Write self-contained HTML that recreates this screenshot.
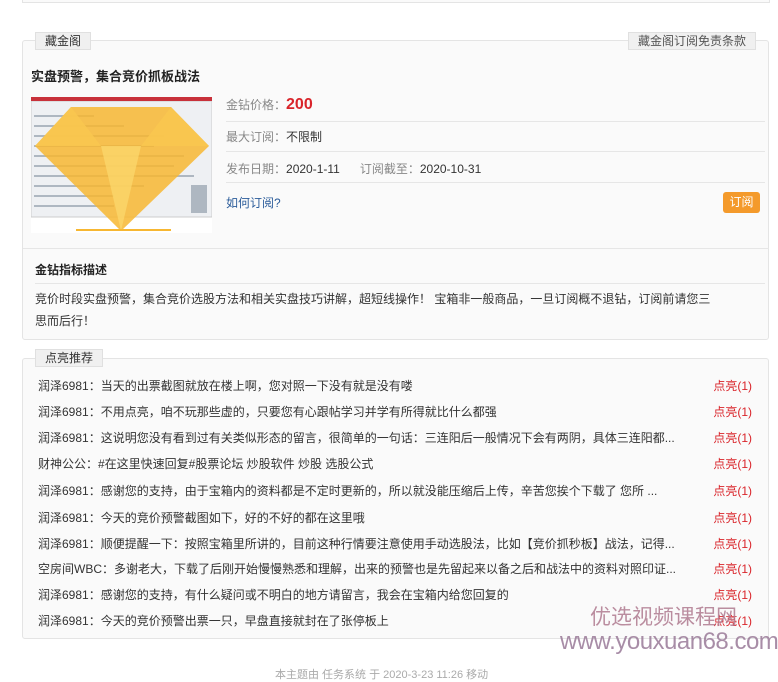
<!DOCTYPE html>
<html><head><meta charset="utf-8"><style>
*{margin:0;padding:0;box-sizing:border-box}
body{width:778px;height:675px;background:#fff;position:relative;overflow:hidden;font-family:"Liberation Sans","Noto Sans CJK SC",sans-serif;font-size:12px;color:#333}
.a{position:absolute;white-space:nowrap}
.panel{position:absolute;left:22px;width:747px;background:#fafafa;border:1px solid #e4e4e4;border-radius:3px}
.tag{position:absolute;background:#f0f0f0;border:1px solid #e0e0e0;padding:0 9px;height:18px;line-height:16px;font-size:12px;color:#333}
.sep{position:absolute;height:1px;background:#e6e6e6}
.g{color:#888}
.r{color:#d9242a}
.row{position:absolute;left:38px;width:714px;line-height:16px}
.row span{position:absolute;right:0;color:#d9242a}
</style></head><body>
<div class="a" style="left:22px;top:0;width:748px;height:3px;border:1px solid #e4e4e4;border-top:none;background:#fafafa"></div>

<div class="panel" style="top:40px;height:300px"></div>
<div class="tag" style="left:35px;top:32px">藏金阁</div>
<div class="tag" style="left:628px;top:32px;color:#555">藏金阁订阅免责条款</div>
<div class="a" style="left:31px;top:66px;font-size:13px;font-weight:bold;color:#222">实盘预警，集合竞价抓板战法</div>
<div class="a" style="left:31px;top:97px;width:181px;height:136px;background:#fff;overflow:hidden">
<div style="height:4px;background:#c8313a"></div>
<svg width="181" height="132" style="position:absolute;top:4px;left:0">
<rect x="0" y="0" width="181" height="116" fill="#eef0f3" stroke="#ccc"/>
<g fill="#7a8a99" opacity=".55"><rect x="3" y="14" width="60" height="2"/><rect x="3" y="24" width="90" height="2"/><rect x="3" y="34" width="130" height="2"/><rect x="3" y="44" width="120" height="2"/><rect x="3" y="54" width="150" height="2"/><rect x="3" y="64" width="140" height="2"/><rect x="3" y="74" width="160" height="2"/><rect x="3" y="84" width="110" height="2"/><rect x="3" y="94" width="80" height="2"/><rect x="3" y="104" width="80" height="2"/><rect x="160" y="84" width="16" height="28"/></g>
<polygon points="40,6 140,6 178,45 90,130 4,45" fill="#f7b731" opacity=".85"/>
<polygon points="40,6 70,45 4,45" fill="#f9c74f" opacity=".9"/>
<polygon points="140,6 110,45 178,45" fill="#f9c74f" opacity=".9"/>
<polygon points="70,45 110,45 90,130" fill="#fbd66a" opacity=".8"/>
<rect x="45" y="128" width="95" height="2" fill="#f7b731"/>
</svg></div>
<div class="a g" style="left:226px;top:97px;line-height:16px">金钻价格：<b class="r" style="font-size:16px">200</b></div>
<div class="sep" style="left:226px;top:121px;width:539px"></div>
<div class="a g" style="left:226px;top:128px">最大订阅：<span style="color:#333">不限制</span></div>
<div class="sep" style="left:226px;top:151px;width:539px"></div>
<div class="a g" style="left:226px;top:160px">发布日期：<span style="color:#333">2020-1-11</span>&nbsp;&nbsp;&nbsp;&nbsp;&nbsp;&nbsp;订阅截至：<span style="color:#333">2020-10-31</span></div>
<div class="sep" style="left:226px;top:182px;width:539px"></div>
<div class="a" style="left:226px;top:194px;color:#2b5c9a">如何订阅?</div>
<div class="a" style="left:723px;top:192px;width:37px;height:21px;background:#f49a2b;border-radius:3px;color:#fff;text-align:center;line-height:21px">订阅</div>
<div class="sep" style="left:23px;top:248px;width:746px"></div>
<div class="a" style="left:35px;top:261px;font-weight:bold;color:#222">金钻指标描述</div>
<div class="sep" style="left:35px;top:283px;width:730px"></div>
<div class="a" style="left:35px;top:288px;line-height:22px">竞价时段实盘预警，集合竞价选股方法和相关实盘技巧讲解，超短线操作！ 宝箱非一般商品，一旦订阅概不退钻，订阅前请您三<br>思而后行！</div>

<div class="panel" style="top:358px;height:281px"></div>
<div class="tag" style="left:35px;top:349px">点亮推荐</div>
<div class="row" style="top:378px">润泽6981：当天的出票截图就放在楼上啊，您对照一下没有就是没有喽<span>点亮(1)</span></div>
<div class="row" style="top:404px">润泽6981：不用点亮，咱不玩那些虚的，只要您有心跟帖学习并学有所得就比什么都强<span>点亮(1)</span></div>
<div class="row" style="top:430px">润泽6981：这说明您没有看到过有关类似形态的留言，很简单的一句话：三连阳后一般情况下会有两阴，具体三连阳都...<span>点亮(1)</span></div>
<div class="row" style="top:456px">财神公公：#在这里快速回复#股票论坛 炒股软件 炒股 选股公式<span>点亮(1)</span></div>
<div class="row" style="top:483px">润泽6981：感谢您的支持，由于宝箱内的资料都是不定时更新的，所以就没能压缩后上传，辛苦您挨个下载了 您所 ...<span>点亮(1)</span></div>
<div class="row" style="top:510px">润泽6981：今天的竞价预警截图如下，好的不好的都在这里哦<span>点亮(1)</span></div>
<div class="row" style="top:536px">润泽6981：顺便提醒一下：按照宝箱里所讲的，目前这种行情要注意使用手动选股法，比如【竞价抓秒板】战法，记得...<span>点亮(1)</span></div>
<div class="row" style="top:561px">空房间WBC：多谢老大，下载了后刚开始慢慢熟悉和理解，出来的预警也是先留起来以备之后和战法中的资料对照印证...<span>点亮(1)</span></div>
<div class="row" style="top:587px">润泽6981：感谢您的支持，有什么疑问或不明白的地方请留言，我会在宝箱内给您回复的<span>点亮(1)</span></div>
<div class="row" style="top:613px">润泽6981：今天的竞价预警出票一只，早盘直接就封在了张停板上<span>点亮(1)</span></div>

<div class="a" style="left:590px;top:601px;font-size:21px;color:#b07a90;opacity:.85">优选视频课程网</div>
<div class="a" style="left:560px;top:628px;font-size:24px;color:#9a7a98;opacity:.85;letter-spacing:-0.5px">www.youxuan68.com</div>
<div class="a" style="left:275px;top:666px;color:#aaa;font-size:11px">本主题由 任务系统 于 2020-3-23 11:26 移动</div>
</body></html>
